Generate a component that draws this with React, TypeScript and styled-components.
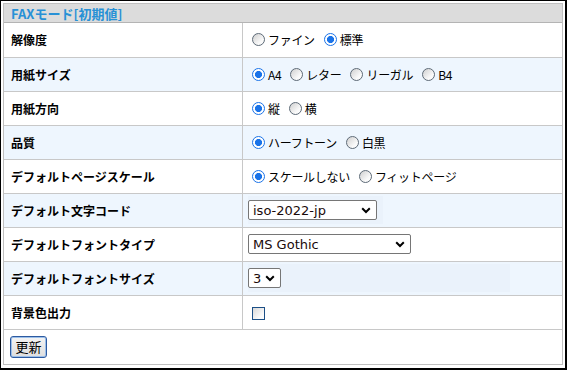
import { FC } from "react";
import styled, { createGlobalStyle } from "styled-components";

const GlobalStyle = createGlobalStyle`
  html, body {
    margin: 0;
    padding: 0;
    background: #fff;
  }
  body {
    font-family: "Noto Sans CJK JP", "DejaVu Sans", sans-serif;
    font-size: 12px;
    color: #000;
  }
`;

const Frame = styled.div`
  width: 567px;
  height: 370px;
  box-sizing: border-box;
  border: 2px solid #000;
  border-top-width: 1px;
  border-left-width: 1px;
  padding: 2px 2px 3px 2px;
  background: #fff;
`;

const Panel = styled.div`
  border: 1px solid #c0c0c0;
  height: 100%;
  box-sizing: border-box;
`;

const Header = styled.div`
  height: 18px;
  background: #dcdcdc;
  border-bottom: 1px solid #b4b4b4;
  display: flex;
  align-items: center;
  padding-left: 7px;
  color: #2891d6;
  font-weight: bold;
  font-size: 13px;
  line-height: 1;
`;

const Table = styled.table`
  width: 100%;
  border-collapse: collapse;
`;

const Row = styled.tr<{ $alt?: boolean }>`
  height: 34px;
  background: ${({ $alt }) => ($alt ? "#eef6fe" : "#fff")};
  & > td {
    border-bottom: 1px solid #c8c8c8;
  }
`;

const Label = styled.td`
  width: 231px;
  padding: 0 0 0 7px;
  border-right: 1px solid #c8c8c8;
  font-weight: bold;
  font-size: 12px;
  white-space: nowrap;
`;

const Value = styled.td`
  padding: 0 0 0 5px;
`;

const Options = styled.div`
  display: flex;
  align-items: center;
  gap: 9px;
  padding-left: 4px;
`;

const Option = styled.label`
  display: flex;
  align-items: center;
  gap: 3px;
  font-size: 12px;
  letter-spacing: -0.3px;
`;

const Radio = styled.span<{ $on?: boolean }>`
  width: 13px;
  height: 13px;
  box-sizing: border-box;
  border-radius: 50%;
  border: 1px solid ${({ $on }) => ($on ? "#1a73e8" : "#5e6b78")};
  background: ${({ $on }) =>
    $on
      ? "radial-gradient(circle, #1a73e8 0 3.3px, #fff 3.8px)"
      : "linear-gradient(135deg, #cfcfcf, #fafafa 70%)"};
  flex-shrink: 0;
`;

const SelectWrap = styled.div<{ $alt?: boolean; $w: number }>`
  display: flex;
  align-items: center;
  height: 28px;
  width: ${({ $w }) => $w}px;
  background: ${({ $alt }) => ($alt ? "#eaf2fb" : "transparent")};
`;

const Select = styled.div<{ $w: number }>`
  width: ${({ $w }) => $w}px;
  height: 20px;
  box-sizing: border-box;
  border: 1px solid #767676;
  border-radius: 2px;
  background: #fff;
  display: flex;
  align-items: center;
  justify-content: space-between;
  padding: 0 5px 0 4px;
  font-family: "DejaVu Sans", Verdana, sans-serif;
  font-size: 13px;
  color: #1a0a0a;
`;

const Chevron: FC = () => (
  <svg width="10" height="7" viewBox="0 0 10 7">
    <path d="M1.2 1.3 L5 5 L8.8 1.3" fill="none" stroke="#000" strokeWidth="2" />
  </svg>
);

const Check = styled.span`
  display: inline-block;
  width: 13px;
  height: 13px;
  box-sizing: border-box;
  border: 1px solid #1c4f86;
  background: linear-gradient(135deg, #d8d8d8, #fbfbfb 75%);
  margin: 5px 0 0 4px;
`;

const Footer = styled.div`
  padding: 6px 0 0 6px;
`;

const Button = styled.button`
  font-family: "Noto Sans CJK JP", sans-serif;
  font-size: 13px;
  height: 22px;
  width: 37px;
  padding: 0;
  border: 1px solid #2d5aa0;
  border-radius: 3px;
  background: linear-gradient(#f4f4f4, #dedede);
  box-shadow: inset 0 0 0 1px #9cc0ea;
  color: #000;
  line-height: 1;
`;

type Opt = [string, boolean];

const RadioRow: FC<{ label: string; opts: Opt[]; alt?: boolean }> = ({
  label,
  opts,
  alt,
}) => (
  <Row $alt={alt}>
    <Label>{label}</Label>
    <Value>
      <Options>
        {opts.map(([text, on]) => (
          <Option key={text}>
            <Radio $on={on} />
            {text}
          </Option>
        ))}
      </Options>
    </Value>
  </Row>
);

const SelectRow: FC<{
  label: string;
  text: string;
  w: number;
  wrap: number;
  alt?: boolean;
}> = ({ label, text, w, wrap, alt }) => (
  <Row $alt={alt}>
    <Label>{label}</Label>
    <Value>
      <SelectWrap $alt={alt} $w={wrap}>
        <Select $w={w}>
          <span>{text}</span>
          <Chevron />
        </Select>
      </SelectWrap>
    </Value>
  </Row>
);

export default function App() {
  return (
    <>
      <GlobalStyle />
      <Frame>
        <Panel>
          <Header>FAXモード[初期値]</Header>
          <Table>
            <tbody>
              <RadioRow
                label="解像度"
                opts={[
                  ["ファイン", false],
                  ["標準", true],
                ]}
              />
              <RadioRow
                alt
                label="用紙サイズ"
                opts={[
                  ["A4", true],
                  ["レター", false],
                  ["リーガル", false],
                  ["B4", false],
                ]}
              />
              <RadioRow
                label="用紙方向"
                opts={[
                  ["縦", true],
                  ["横", false],
                ]}
              />
              <RadioRow
                alt
                label="品質"
                opts={[
                  ["ハーフトーン", true],
                  ["白黒", false],
                ]}
              />
              <RadioRow
                label="デフォルトページスケール"
                opts={[
                  ["スケールしない", true],
                  ["フィットページ", false],
                ]}
              />
              <SelectRow alt label="デフォルト文字コード" text="iso-2022-jp" w={129} wrap={135} />
              <SelectRow label="デフォルトフォントタイプ" text="MS Gothic" w={163} wrap={169} />
              <SelectRow alt label="デフォルトフォントサイズ" text="3" w={33} wrap={262} />
              <Row>
                <Label>背景色出力</Label>
                <Value>
                  <Check />
                </Value>
              </Row>
            </tbody>
          </Table>
          <Footer>
            <Button>更新</Button>
          </Footer>
        </Panel>
      </Frame>
    </>
  );
}
